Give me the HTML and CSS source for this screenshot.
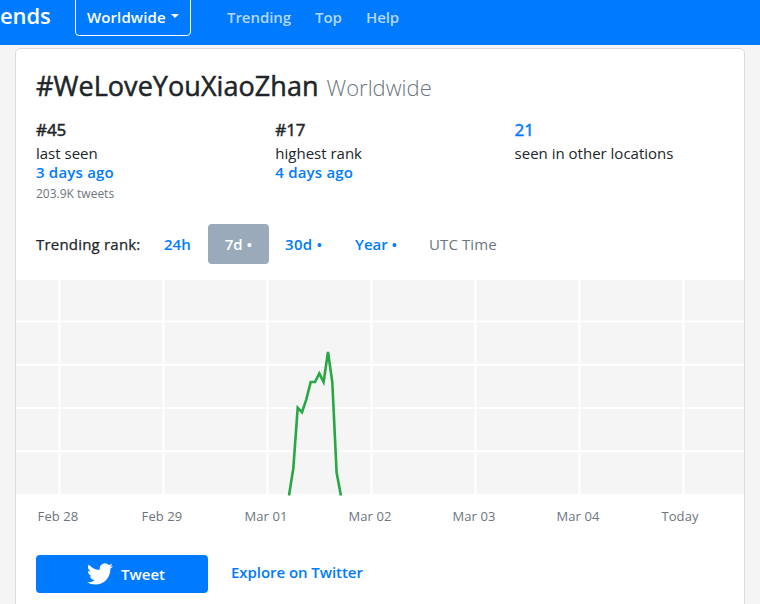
FILE: index.html
```html
<!DOCTYPE html>
<html lang="en">
<head>
<meta charset="utf-8">
<title>#WeLoveYouXiaoZhan</title>
<link rel="stylesheet" href="styles.css">
</head>
<body>
<header class="navbar">
  <a class="brand">ends</a>
  <button class="location">Worldwide<span class="caret"></span></button>
  <nav class="links"><a>Trending</a><a>Top</a><a>Help</a></nav>
</header>
<main class="card">
  <h1 class="title"><span class="tag">#WeLoveYouXiaoZhan</span><small class="place">Worldwide</small></h1>
  <section class="stats">
    <div class="stat"><strong class="figure">#45</strong><span class="label">last seen</span><a class="when">3 days ago</a><small class="count">203.9K tweets</small></div>
    <div class="stat"><strong class="figure">#17</strong><span class="label">highest rank</span><a class="when">4 days ago</a></div>
    <div class="stat"><a class="figure">21</a><span class="label">seen in other locations</span></div>
  </section>
  <div class="ranges">
    <span class="caption">Trending rank:</span>
    <a class="range day">24h</a>
    <a class="range active">7d •</a>
    <a class="range month">30d •</a>
    <a class="range year">Year •</a>
    <span class="utc">UTC Time</span>
  </div>
  <svg class="chart" width="728" height="218" viewBox="16 280 728 218">
    <rect x="16" y="280" width="728" height="214" fill="#f5f5f5"/>
    <path class="grid" d="M59.4 280v214M163.4 280v214M267.4 280v214M371.4 280v214M475.4 280v214M579.4 280v214M683.4 280v214M16 321.6h728M16 364.8h728M16 408h728M16 451.2h728"/>
    <path class="trend" d="M289 495.5L293.3 468.5L297.7 407.7L302 412.2L306.3 399.3L310.7 382H315L319.3 373.5L323.6 382L328 352L332.3 382L336.6 472.5L340.9 495.5"/>
  </svg>
  <div class="axis"><span>Feb 28</span><span>Feb 29</span><span>Mar 01</span><span>Mar 02</span><span>Mar 03</span><span>Mar 04</span><span class="today">Today</span></div>
  <div class="actions">
    <a class="tweet"><svg width="26" height="26" viewBox="0 0 24 24" fill="#fff"><path d="M23.95 4.57a10 10 0 0 1-2.82.77 4.96 4.96 0 0 0 2.16-2.72c-.95.55-2 .95-3.13 1.18a4.92 4.92 0 0 0-8.38 4.48C7.69 8.09 4.07 6.13 1.64 3.16a4.92 4.92 0 0 0 1.52 6.57 4.9 4.9 0 0 1-2.23-.61v.06a4.92 4.92 0 0 0 3.95 4.83 5 5 0 0 1-2.21.08 4.94 4.94 0 0 0 4.6 3.42A9.87 9.87 0 0 1 0 19.54a14 14 0 0 0 7.55 2.21c9.05 0 14-7.5 14-13.98 0-.21 0-.42-.02-.63a9.94 9.94 0 0 0 2.46-2.55z"/></svg><span>Tweet</span></a>
    <a class="explore">Explore on Twitter</a>
  </div>
</main>
</body>
</html>
```
FILE: styles.css
```css
* { box-sizing: border-box; }
body {
  margin: 0;
  height: 604px;
  overflow: hidden;
  background: #f5f5f5;
  color: #212529;
  font: 15px/20px "Open Sans", sans-serif;
}
a { color: #007bff; font-weight: 600; }
.navbar { display: flex; height: 45px; background: #007bff; white-space: nowrap; }
.brand {
  flex: none;
  width: 51px;
  color: #fff;
  font-size: 22px;
  line-height: 30px;
  letter-spacing: -.1px;
}
.location {
  display: flex;
  align-items: center;
  flex: none;
  width: 116px;
  height: 40px;
  margin: -4px 0 0 24px;
  padding: 1px 0 0 11px;
  border: 1px solid #fff;
  border-radius: 4px;
  background: none;
  color: #fff;
  font: 600 15px/20px "Open Sans", sans-serif;
  letter-spacing: .1px;
}
.caret { margin: -1px 0 0 5px; border: 4.5px solid transparent; border-top-color: #fff; border-bottom: 0; }
.links { display: flex; gap: 24px; padding: 7px 0 0 36px; letter-spacing: -.05px; }
.links a { color: #b3d7ff; }
.card {
  width: 730px;
  height: 570px;
  margin: 3px 0 0 15px;
  border: 1px solid #dcdcdc;
  border-radius: 5px;
  background: #fff;
  white-space: nowrap;
}
.title {
  display: flex;
  align-items: baseline;
  gap: 8px;
  height: 70px;
  margin: 0;
  padding: 19px 0 0 20px;
  font-size: 27px;
  font-weight: 400;
  line-height: 36px;
}
.tag { letter-spacing: .05px; -webkit-text-stroke: .5px; }
.place { color: #6c757d; font-size: 22px; font-weight: 300; }
.stats { display: grid; grid-template-columns: repeat(3, 239.3px); height: 105px; padding-left: 20px; }
.stat { display: flex; flex-direction: column; align-items: flex-start; }
.figure { height: 25px; font-size: 17px; line-height: 22px; font-weight: 400; -webkit-text-stroke: .5px; letter-spacing: -.1px; }
.label { height: 19px; line-height: 19px; }
.when { height: 19px; line-height: 19px; letter-spacing: .2px; }
.count { height: 22px; color: #6c757d; font-size: 12px; line-height: 24px; }
.ranges { display: flex; align-items: center; height: 40px; padding-left: 20px; }
.caption { width: 128px; letter-spacing: .2px; -webkit-text-stroke: .25px; }
.range { flex: none; }
.day { width: 44px; }
.active { width: 61px; height: 40px; border-radius: 4px; background: #9aaaba; color: #fff; line-height: 40px; text-align: center; }
.month { width: 70px; margin-left: 16px; letter-spacing: .3px; }
.year { width: 74px; }
.utc { color: #6c757d; letter-spacing: .1px; }
.chart { display: block; margin-top: 16px; }
.grid { fill: none; stroke: #fff; stroke-width: 2; }
.trend { fill: none; stroke: #28a745; stroke-width: 2.6; }
.axis { display: grid; grid-template-columns: repeat(7, 104px); margin-left: -10px; padding-top: 8px; color: #6c757d; font-size: 13px; letter-spacing: .1px; text-align: center; }
.today { margin-left: -4px; }
.actions { display: flex; margin: 29px 0 0 20px; }
.tweet { display: flex; align-items: center; justify-content: center; gap: 8px; width: 172px; height: 38px; padding-left: 8px; border-radius: 4px; background: #007bff; color: #fff; }
.explore { margin: 7px 0 0 23px; letter-spacing: -.05px; }
```
